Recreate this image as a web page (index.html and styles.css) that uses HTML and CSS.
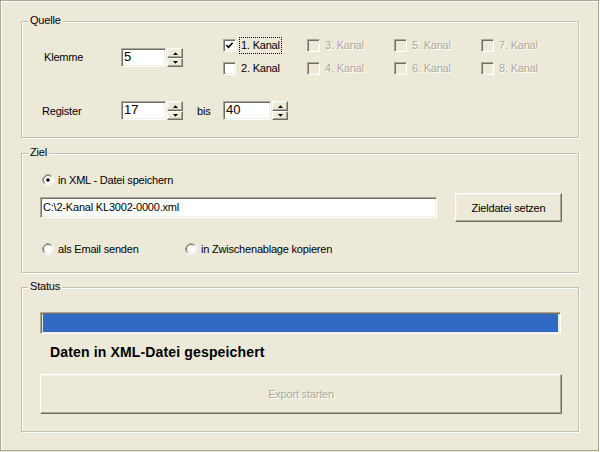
FILE: index.html
```html
<!DOCTYPE html>
<html lang="de">
<head>
<meta charset="utf-8">
<title>Export</title>
<link rel="stylesheet" href="styles.css">
</head>
<body>
<div class="window">
  <section class="group g-quelle">
    <span class="legend">Quelle</span>
    <div class="row r-klemme">
      <span class="lbl-klemme">Klemme</span>
      <div class="spin">
        <div class="edit w45">5</div>
        <div class="spinbtns">
          <span class="sb"><svg width="5" height="3" viewBox="0 0 5 3"><polygon points="0,3 5,3 2.5,0.3"/></svg></span>
          <span class="sb sb-dn"><svg width="5" height="3" viewBox="0 0 5 3"><polygon points="0,0 5,0 2.5,2.7"/></svg></span>
        </div>
      </div>
      <div class="kanaele">
        <label class="cb"><span class="box"><svg width="9" height="9" viewBox="0 0 9 9"><polyline points="1.3,4 3.5,6.3 7.6,1.8" fill="none" stroke="#000" stroke-width="1.7"/></svg></span><span class="txt focus">1. Kanal</span></label>
        <label class="cb"><span class="box"></span><span class="txt">2. Kanal</span></label>
        <label class="cb"><span class="box dis"></span><span class="txt dis-text">3. Kanal</span></label>
        <label class="cb"><span class="box dis"></span><span class="txt dis-text">4. Kanal</span></label>
        <label class="cb"><span class="box dis"></span><span class="txt dis-text">5. Kanal</span></label>
        <label class="cb"><span class="box dis"></span><span class="txt dis-text">6. Kanal</span></label>
        <label class="cb"><span class="box dis"></span><span class="txt dis-text">7. Kanal</span></label>
        <label class="cb"><span class="box dis"></span><span class="txt dis-text">8. Kanal</span></label>
      </div>
    </div>
    <div class="row r-register">
      <span class="lbl-register">Register</span>
      <div class="spin">
        <div class="edit w45">17</div>
        <div class="spinbtns">
          <span class="sb"><svg width="5" height="3" viewBox="0 0 5 3"><polygon points="0,3 5,3 2.5,0.3"/></svg></span>
          <span class="sb sb-dn"><svg width="5" height="3" viewBox="0 0 5 3"><polygon points="0,0 5,0 2.5,2.7"/></svg></span>
        </div>
      </div>
      <span class="bis">bis</span>
      <div class="spin">
        <div class="edit w48">40</div>
        <div class="spinbtns">
          <span class="sb"><svg width="5" height="3" viewBox="0 0 5 3"><polygon points="0,3 5,3 2.5,0.3"/></svg></span>
          <span class="sb sb-dn"><svg width="5" height="3" viewBox="0 0 5 3"><polygon points="0,0 5,0 2.5,2.7"/></svg></span>
        </div>
      </div>
    </div>
  </section>

  <section class="group g-ziel">
    <span class="legend">Ziel</span>
    <div class="radio-row">
      <label class="rb">
        <svg viewBox="0 0 12 12"><circle cx="6" cy="6" r="5" fill="#fff"/><path d="M2.11 9.89 A5.5 5.5 0 0 1 9.89 2.11" fill="none" stroke="#aca899"/><path d="M9.89 2.11 A5.5 5.5 0 0 1 2.11 9.89" fill="none" stroke="#fff"/><path d="M2.82 9.18 A4.5 4.5 0 0 1 9.18 2.82" fill="none" stroke="#716f64"/><path d="M9.18 2.82 A4.5 4.5 0 0 1 2.82 9.18" fill="none" stroke="#f1efe2"/><circle cx="6" cy="6" r="1.8" fill="#000"/></svg>
        <span>in XML - Datei speichern</span>
      </label>
    </div>
    <div class="file-row">
      <div class="file">C:\2-Kanal KL3002-0000.xml</div>
      <div class="btn btn-ziel">Zieldatei setzen</div>
    </div>
    <div class="radio-row radio-row2">
      <label class="rb rb-email">
        <svg viewBox="0 0 12 12"><circle cx="6" cy="6" r="5" fill="#fff"/><path d="M2.11 9.89 A5.5 5.5 0 0 1 9.89 2.11" fill="none" stroke="#aca899"/><path d="M9.89 2.11 A5.5 5.5 0 0 1 2.11 9.89" fill="none" stroke="#fff"/><path d="M2.82 9.18 A4.5 4.5 0 0 1 9.18 2.82" fill="none" stroke="#716f64"/><path d="M9.18 2.82 A4.5 4.5 0 0 1 2.82 9.18" fill="none" stroke="#f1efe2"/></svg>
        <span>als Email senden</span>
      </label>
      <label class="rb">
        <svg viewBox="0 0 12 12"><circle cx="6" cy="6" r="5" fill="#fff"/><path d="M2.11 9.89 A5.5 5.5 0 0 1 9.89 2.11" fill="none" stroke="#aca899"/><path d="M9.89 2.11 A5.5 5.5 0 0 1 2.11 9.89" fill="none" stroke="#fff"/><path d="M2.82 9.18 A4.5 4.5 0 0 1 9.18 2.82" fill="none" stroke="#716f64"/><path d="M9.18 2.82 A4.5 4.5 0 0 1 2.82 9.18" fill="none" stroke="#f1efe2"/></svg>
        <span>in Zwischenablage kopieren</span>
      </label>
    </div>
  </section>

  <section class="group g-status">
    <span class="legend">Status</span>
    <div class="progress"><div class="bar"></div></div>
    <div class="status-text">Daten in XML-Datei gespeichert</div>
    <div class="btn btn-export">Export starten</div>
  </section>
</div>
</body>
</html>
```

FILE: styles.css
```css
* { box-sizing: border-box; }

body {
  margin: 0;
  background: #ECE9D8;
  font-family: "Liberation Sans", Arial, sans-serif;
  font-size: 11px;
  letter-spacing: -0.2px;
  color: #000;
}

.window {
  width: 599px;
  height: 451px;
  border: 1px solid #a9a696;
  box-shadow: inset 1px 1px 0 #fff, 1px 1px 0 #fff;
  padding: 20px 19px 0 20px;
  display: flex;
  flex-direction: column;
}

.group {
  position: relative;
  width: 558px;
  border: 1px solid #c4c1b1;
  box-shadow: inset 1px 1px 0 #fff, 1px 1px 0 #fff;
  flex: none;
}

.legend {
  position: absolute;
  left: 6px;
  top: -8px;
  padding: 0 2px;
  line-height: 13px;
  background: #ECE9D8;
}

/* sunken / raised bevels */
.edit, .file, .box, .progress {
  border: 1px solid;
  border-color: #aca899 #fff #fff #aca899;
  box-shadow: inset 1px 1px 0 #716f64, inset -1px -1px 0 #f1efe2;
}

.btn, .sb {
  border: 1px solid;
  border-color: #fff #716f64 #716f64 #fff;
  box-shadow: inset -1px -1px 0 #aca899, inset 1px 1px 0 #f1efe2;
  background: #ECE9D8;
}

/* Quelle */
.g-quelle {
  height: 117px;
  margin-bottom: 15px;
  padding-top: 17px;
}

.row {
  display: flex;
  align-items: flex-start;
}

.lbl-klemme {
  width: 99px;
  padding-left: 22px;
  margin-top: 9px;
  line-height: 19px;
}

.r-klemme .spin { margin-top: 9px; }

.spin {
  display: flex;
  flex: none;
}

.edit {
  height: 19px;
  background: #fff;
  font-size: 13px;
  letter-spacing: 0;
  line-height: 16px;
  padding-left: 2px;
}

.w45 { width: 45px; }
.w48 { width: 48px; }

.spinbtns {
  margin-left: 1px;
  width: 16px;
  display: flex;
  flex-direction: column;
}

.sb {
  height: 10px;
  display: flex;
  align-items: center;
  justify-content: center;
}

.sb-dn { height: 9px; }

.sb svg { display: block; fill: #000; }

.kanaele {
  margin-left: 40px;
  display: grid;
  grid-template-columns: 84px 87px 87px auto;
  grid-template-rows: 13px 13px;
  grid-auto-flow: column;
  row-gap: 10px;
}

.cb {
  display: flex;
  align-items: center;
  height: 13px;
}

.box {
  width: 13px;
  height: 13px;
  flex: none;
  background: #fff;
  display: flex;
  align-items: center;
  justify-content: center;
}

.box svg { display: block; }

.box.dis { background: #ECE9D8; }

.txt {
  margin-left: 4px;
  padding: 1px 1px;
  line-height: 13px;
  white-space: nowrap;
}

.txt.focus { outline: 1px dotted #000; }

.dis-text {
  color: #aca899;
  text-shadow: 1px 1px 0 #fff;
}

.r-register {
  margin-top: 26px;
  align-items: center;
}

.lbl-register {
  width: 99px;
  padding-left: 20px;
}

.bis {
  width: 40px;
  padding-left: 14px;
}

/* Ziel */
.g-ziel {
  height: 120px;
  margin-bottom: 14px;
  padding-top: 19px;
}

.radio-row {
  display: flex;
  align-items: center;
  height: 13px;
  margin-left: 20px;
}

.rb {
  display: flex;
  align-items: center;
}

.rb svg {
  width: 12px;
  height: 12px;
  flex: none;
  display: block;
}

.rb span { margin-left: 4px; white-space: nowrap; }

.rb-email { width: 143px; }

.file-row {
  display: flex;
  align-items: center;
  height: 29px;
  margin: 7px 0 0 18px;
}

.file {
  width: 397px;
  height: 21px;
  background: #fff;
  padding-left: 2px;
  line-height: 18px;
}

.btn {
  display: flex;
  align-items: center;
  justify-content: center;
}

.btn-ziel {
  width: 107px;
  height: 29px;
  margin-left: 18px;
}

.radio-row2 { margin-top: 20px; }

/* Status */
.g-status {
  height: 145px;
  padding-top: 24px;
}

.progress {
  margin-left: 18px;
  width: 521px;
  height: 22px;
  padding: 1px 2px;
}

.bar {
  height: 100%;
  background: #316AC5;
}

.status-text {
  margin: 10px 0 0 28px;
  font-weight: bold;
  font-size: 14px;
  letter-spacing: 0.15px;
  line-height: 17px;
}

.btn-export {
  margin: 13px 0 0 18px;
  width: 522px;
  height: 40px;
  color: #aca899;
  text-shadow: 1px 1px 0 #fff;
}
```
